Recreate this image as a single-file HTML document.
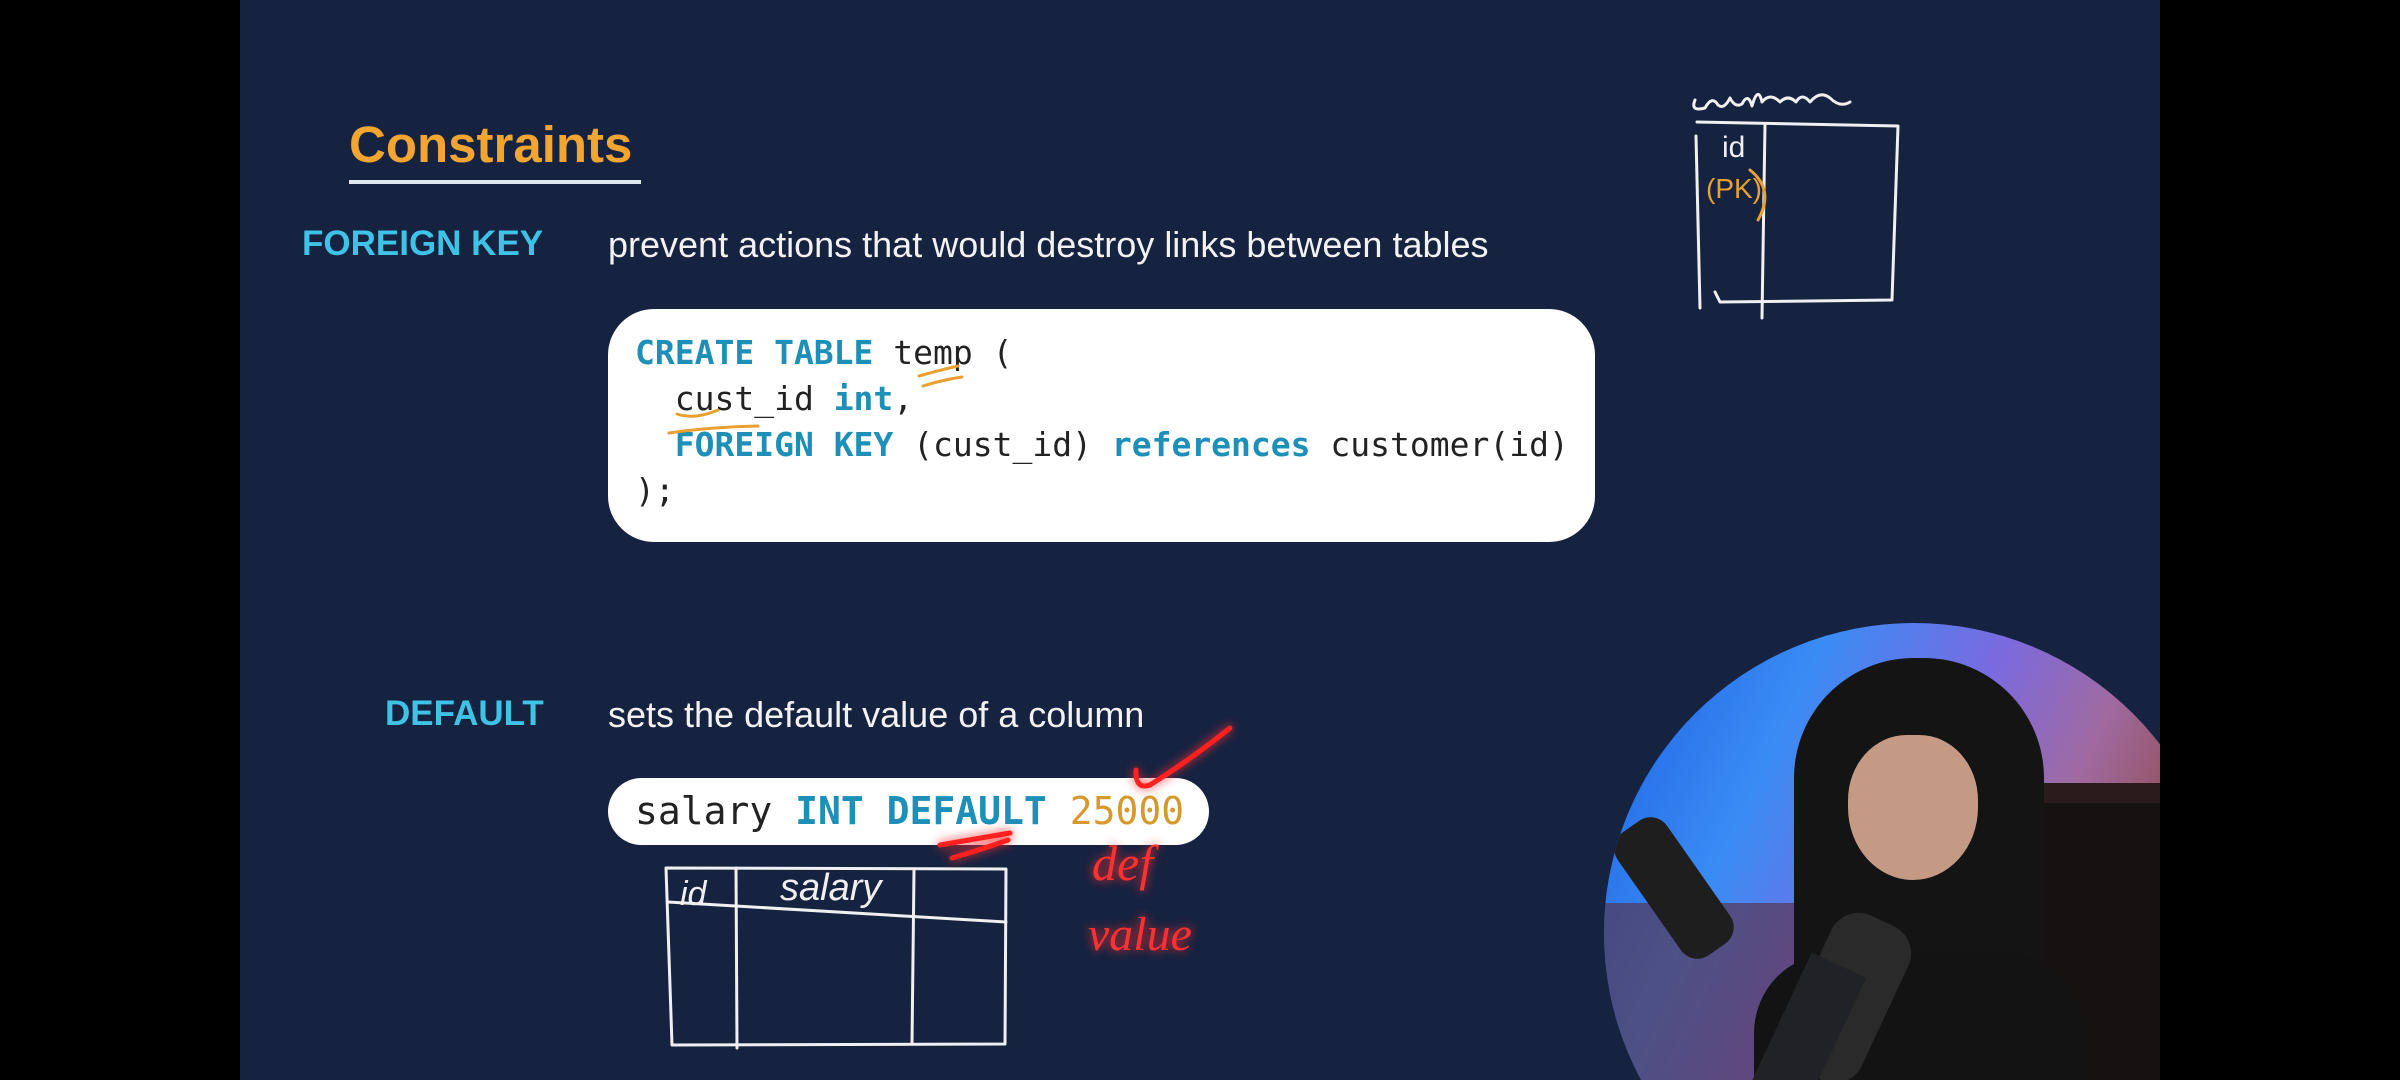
<!DOCTYPE html>
<html><head><meta charset="utf-8"><style>
html,body{margin:0;padding:0;background:#000;width:2400px;height:1080px;overflow:hidden}
#slide{position:absolute;left:240px;top:0;width:1920px;height:1080px;background:#152240;overflow:hidden}
.t{position:absolute;font-family:"Liberation Sans",sans-serif;white-space:nowrap}
.mono{font-family:"DejaVu Sans Mono","Liberation Mono",monospace}
.k{color:#1e90b8;font-weight:bold}
</style></head><body>
<div id="slide">
<div class="t" style="left:109px;top:115px;font-size:51px;font-weight:bold;color:#f3a531">Constraints</div>
<div style="position:absolute;left:109px;top:180px;width:292px;height:4px;background:#dfe8f0"></div>
<div class="t" style="left:62px;top:224px;font-size:35px;font-weight:bold;color:#3ec3e6">FOREIGN KEY</div>
<div class="t" style="left:368px;top:224px;font-size:36px;color:#f2f2f2">prevent actions that would destroy links between tables</div>
<div style="position:absolute;left:368px;top:309px;width:987px;height:233px;background:#fff;border-radius:46px"></div>
<div class="t mono" style="left:395px;top:330px;font-size:33px;line-height:46px;color:#222">
<span class="k">CREATE TABLE</span> temp (<br>&nbsp;&nbsp;cust_id <span class="k">int</span>,<br>&nbsp;&nbsp;<span class="k">FOREIGN KEY</span> (cust_id) <span class="k">references</span> customer(id)<br>);
</div>
<div class="t" style="left:145px;top:694px;font-size:35px;font-weight:bold;color:#3ec3e6">DEFAULT</div>
<div class="t" style="left:368px;top:694px;font-size:36px;color:#f2f2f2">sets the default value of a column</div>
<div style="position:absolute;left:368px;top:778px;width:601px;height:67px;background:#fff;border-radius:34px"></div>
<div class="t mono" style="left:395px;top:787px;font-size:38px;line-height:48px;color:#222">salary <span class="k">INT DEFAULT</span> <span style="color:#d49a2e">25000</span></div>

<svg style="position:absolute;left:0;top:0" width="1920" height="1080" fill="none" stroke-linecap="round" stroke-linejoin="round">
<g stroke="#e8a030" stroke-width="3">
<path d="M679 376 Q700 370 718 366"/><path d="M683 386 Q702 380 722 377"/>
<path d="M437 414 Q455 420 478 410"/><path d="M429 433 Q470 427 518 426"/>
</g>
<g stroke="#f0f0f0" stroke-width="3">
<path d="M1457 122 L1658 126 L1652 300 L1480 302 L1475 292"/><path d="M1456 136 L1460 308"/><path d="M1525 124 L1522 318"/>
<path d="M1455 100 Q1450 112 1465 108 Q1472 95 1478 105 Q1484 110 1490 98 Q1495 108 1502 104 Q1508 92 1512 106 Q1518 85 1522 102 Q1530 92 1540 102 Q1548 94 1556 102 Q1562 92 1570 102 Q1580 90 1590 98 Q1600 108 1610 102"/>
</g>
<text x="1482" y="157" font-family="Liberation Sans" font-size="30" fill="#f0f0f0">id</text>
<text x="1466" y="198" font-family="Liberation Sans Narrow,Liberation Sans" font-size="28" fill="#e8a030">(PK)</text>
<path d="M1510 170 Q1535 190 1518 220" stroke="#e8a030" stroke-width="3"/>
<g stroke="#f0f0f0" stroke-width="3">
<path d="M426 868 L766 869 L765 1044 L432 1045 Z"/><path d="M428 902 L766 922"/>
<path d="M496 868 L497 1048"/><path d="M674 871 L672 1043"/>
</g>
<text x="440" y="905" font-family="Liberation Sans" font-size="34" fill="#f0f0f0" font-style="italic">id</text>
<text x="540" y="900" font-family="Liberation Sans" font-size="38" fill="#f0f0f0" font-style="italic">salary</text>
<g stroke="#ff2020" stroke-width="5" style="filter:drop-shadow(0 0 5px #ff3030)">
<path d="M896 770 Q895 790 910 785 Q950 760 990 728"/>
<path d="M700 845 L770 833 M712 858 Q740 850 768 840"/>
</g>
<text x="852" y="880" font-family="Liberation Serif" font-size="50" font-style="italic" fill="#ff3030" style="filter:drop-shadow(0 0 5px #ff3030)">def</text>
<text x="848" y="950" font-family="Liberation Serif" font-size="48" font-style="italic" fill="#ff3030" style="filter:drop-shadow(0 0 5px #ff3030)">value</text>
</svg>

<div style="position:absolute;left:1364px;top:623px;width:556px;height:457px;overflow:hidden">
<div style="position:absolute;left:0;top:0;width:620px;height:620px;border-radius:50%;overflow:hidden;background:linear-gradient(115deg,#1a5fe0 0%,#3a8cf5 25%,#7a6ae0 45%,#a06aa0 60%,#8a4030 80%,#3a2020 100%)">
<div style="position:absolute;left:0;top:280px;width:220px;height:400px;background:#5a2a3a;opacity:.6"></div>
<div style="position:absolute;left:400px;top:160px;width:220px;height:500px;background:#2a1c1c"></div>
<div style="position:absolute;left:430px;top:180px;width:140px;height:480px;background:#161212"></div>
<div style="position:absolute;left:190px;top:35px;width:250px;height:600px;background:#141414;border-radius:120px 120px 0 0"></div>
<div style="position:absolute;left:244px;top:112px;width:130px;height:145px;background:#c49a85;border-radius:45% 45% 50% 50%"></div>
<div style="position:absolute;left:150px;top:330px;width:330px;height:300px;background:#131313;border-radius:80px 80px 0 0"></div>
<div style="position:absolute;left:200px;top:290px;width:85px;height:170px;background:#2a2a2a;transform:rotate(25deg);border-radius:30px"></div>
<div style="position:absolute;left:40px;top:190px;width:60px;height:150px;background:#1e1e1e;transform:rotate(-35deg);border-radius:20px"></div>
<div style="position:absolute;left:150px;top:330px;width:60px;height:260px;background:#202225;transform:rotate(25deg)"></div>
</div>
</div>
</div>
</body></html>
